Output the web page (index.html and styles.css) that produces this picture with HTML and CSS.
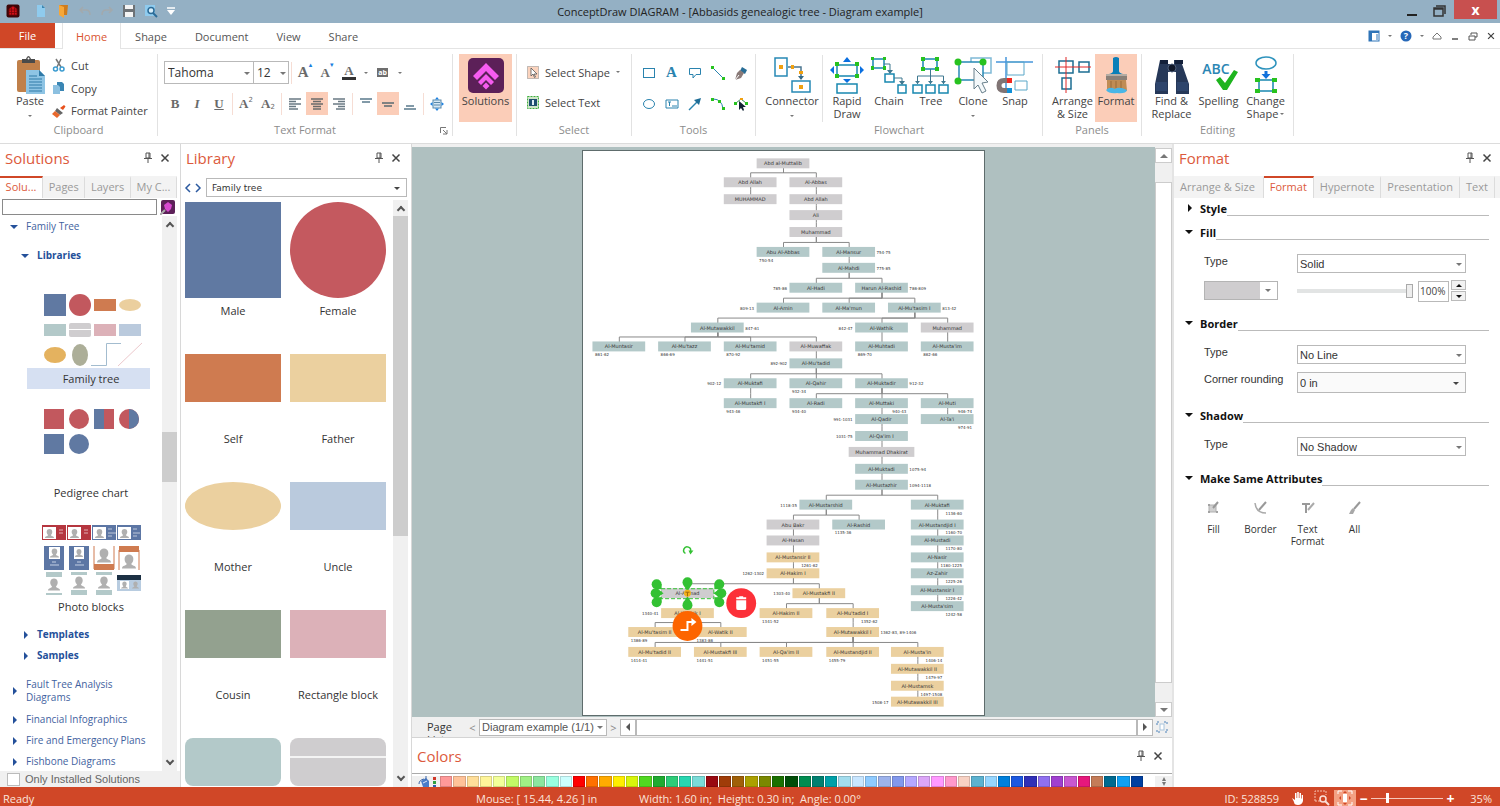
FILE: index.html
```
<!DOCTYPE html>
<html lang="en">
<head>
    <meta charset="UTF-8">
    <meta name="viewport" content="width=device-width, initial-scale=1.0">
    <title>ConceptDraw DIAGRAM</title>
    <link rel="stylesheet" href="styles.css">
</head>
<body>
    <svg class="defs" aria-hidden="true">
        <symbol id="pin" viewBox="0 0 12 12"><path d="M4 1h4v5H4zM7 1v5M2 6.500h8M6 7v4" fill="none" stroke="#555"/></symbol>
        <symbol id="cross" viewBox="0 0 12 12"><path d="M2.500 2.500l7 7M9.500 2.500l-7 7" stroke="#444" stroke-width="1.500"/></symbol>
        <symbol id="person" viewBox="0 0 12 12"><path d="M0 12c0-3 4-2 4-4-3-3-2-8 2-8s5 5 2 8c0 2 4 1 4 4z" fill="#b0b0b0"/></symbol>
    </svg>

    <header class="titlebar">
        <div class="quick">
            <button aria-label="App"><svg width="14" height="14"><rect width="13" height="13" x="0.500" y="0.500" rx="2" fill="#3c0508"/><path d="M3 5l4-3 4 3v6H3zM3 6h8M3 8.500h8M5.500 4v7M8.500 4v7" fill="#d01018" stroke="#7a0508" stroke-width="0.800"/></svg></button>
            <button aria-label="New"><svg width="14" height="14"><path d="M3 1h5l3 3v9H3z" fill="#8fcbee"/><path d="M8 1v3h3z" fill="#3d86b0"/></svg></button>
            <button aria-label="Open"><svg width="14" height="14"><path d="M3 1h9l-1 10H3z" fill="#d07c1c"/><path d="M3 1l5 2v11l-5-3z" fill="#f7a738"/></svg></button>
            <button aria-label="Undo"><svg width="14" height="14"><path d="M5 3L2 6l3 3M2 6h6q4 0 4 5" fill="none" stroke="#a2a9ad" stroke-width="1.500"/></svg></button>
            <button aria-label="Redo"><svg width="14" height="14"><path d="M9 3l3 3-3 3M12 6H6q-4 0-4 5" fill="none" stroke="#a2a9ad" stroke-width="1.500"/></svg></button>
            <button aria-label="Save"><svg width="14" height="14"><path d="M1 1h12v12H1z" fill="#6d7276"/><path d="M3 1h8v4H3zM3 8h8v5H3z" fill="#f4f4f4"/></svg></button>
            <button aria-label="Preview"><svg width="14" height="14"><path d="M1 1h10v11H1z" fill="#8fcbee"/><circle cx="7" cy="6.500" r="3" fill="#d8eefa" stroke="#2c6c98" stroke-width="1.500"/><path d="M9 9l4 4" stroke="#2c6c98" stroke-width="2"/></svg></button>
            <button class="more" aria-label="More"><svg width="10" height="10"><path d="M1 2h8" stroke="#fff" stroke-width="1.500"/><path d="M1 4h8L5 9z" fill="#fff"/></svg></button>
        </div>
        <div class="title">ConceptDraw DIAGRAM - [Abbasids genealogic tree - Diagram example]</div>
        <div class="window">
            <button aria-label="Minimize"><svg width="14" height="16"><path d="M2 13h10" stroke="#222" stroke-width="2"/></svg></button>
            <button aria-label="Restore"><svg width="14" height="16"><path d="M2 6h9v8H2zM4 4h9v8M2 7h9" fill="none" stroke="#333" stroke-width="1.500"/></svg></button>
            <button class="close" aria-label="Close">x</button>
        </div>
    </header>

    <nav class="menu">
        <a class="file" href="#">File</a>
        <a class="on" href="#">Home</a>
        <a href="#">Shape</a>
        <a href="#">Document</a>
        <a href="#">View</a>
        <a href="#">Share</a>
        <div class="menu-tools">
            <button aria-label="Layout"><svg width="12" height="12"><rect x="1" y="1" width="10" height="10" fill="#fff" stroke="#2f74b8"/><path d="M1 1h3v10H1zM1 1h10v2H1z" fill="#2f74b8"/><path d="M8 5h2M8 7h2M8 9h2" stroke="#2f74b8"/></svg></button>
            <i class="caret"></i>
            <button aria-label="Help"><svg width="12" height="12"><circle cx="6" cy="6" r="5.500" fill="#2668b8"/><text x="6" y="9" font-size="9" font-weight="700" fill="#fff" text-anchor="middle">?</text></svg></button>
            <i class="caret"></i>
            <button aria-label="Collapse"><svg width="10" height="10"><path d="M1 6l4-4 4 4v2H1z" fill="none" stroke="#777"/></svg></button>
            <button aria-label="Minimize child"><svg width="10" height="10"><path d="M2 8h6" stroke="#555" stroke-width="1.500"/></svg></button>
            <button aria-label="Restore child"><svg width="10" height="10"><path d="M1 5h6v4H1zM3 4V2h6v4H7" fill="none" stroke="#555"/></svg></button>
            <button aria-label="Close child"><svg width="10" height="10"><use href="#cross"/></svg></button>
        </div>
    </nav>

    <section class="ribbon">
        <div class="group clipboard">
            <div class="tools">
                <button class="big paste"><svg width="32" height="40"><rect x="3" y="6" width="23" height="32" rx="2" fill="#c0804a"/><path d="M8 9V5h4q1-3 2.500-3T17 5h4v4z" fill="#4a4a4a"/><circle cx="14.500" cy="4.500" r="1" fill="#fff"/><path d="M12 16h13l6 6v18H12z" fill="#8ec4e4"/><path d="M25 16v6h6z" fill="#2f7aa8"/><path d="M15 22h8M15 25h13M15 28h13M15 31h13M15 34h13M15 37h13" stroke="#2f7aa8" stroke-width="1.200"/></svg><span>Paste</span><i class="caret"></i></button>
                <div class="stack">
                    <button><svg width="14" height="14"><path d="M4 1l5 8M9 1L5 9" stroke="#777" stroke-width="1.500"/><circle cx="3.500" cy="11" r="2" fill="none" stroke="#3a9bd0" stroke-width="1.500"/><circle cx="10" cy="11" r="2" fill="none" stroke="#3a9bd0" stroke-width="1.500"/></svg>Cut</button>
                    <button><svg width="14" height="14"><path d="M5 1h5l2 2v7H5z" fill="#3a86b4"/><path d="M1 4h5l2 2v7H1z" fill="#8cc0e0"/></svg>Copy</button>
                    <button><svg width="14" height="14"><path d="M8 4l4-3 1.500 1.500L11 6z" fill="#e8501c"/><path d="M5 4l6 5-3 2-5-4z" fill="#666"/><path d="M3 7l5 4-3 3-5-4z" fill="#e8682c"/></svg>Format Painter</button>
                </div>
            </div>
            <h3>Clipboard</h3>
        </div>
        <div class="group textformat">
            <div class="tools rows">
                <div class="row">
                    <span class="pick font"><select aria-label="Font"><option>Tahoma</option></select></span>
                    <span class="pick size"><select aria-label="Font size"><option>12</option></select></span>
                    <i class="bar"></i>
                    <button class="sq serif grow">A<sup>▴</sup></button>
                    <button class="sq serif shrink">A<sup>▾</sup></button>
                    <button class="sq serif color">A</button>
                    <i class="caret"></i>
                    <button class="sq" aria-label="Highlight"><svg width="12" height="10"><path d="M0 0h11v9H0z" fill="#6e6e6e"/><text x="5.500" y="7" font-size="7" font-weight="700" fill="#fff" text-anchor="middle">ab</text></svg></button>
                    <i class="caret"></i>
                </div>
                <div class="row">
                    <button class="sq serif">B</button>
                    <button class="sq serif it">I</button>
                    <button class="sq serif un">U</button>
                    <i class="bar"></i>
                    <button class="sq serif">A<small class="up">2</small></button>
                    <button class="sq serif">A<small>2</small></button>
                    <i class="bar"></i>
                    <button class="sq" aria-label="Left"><svg width="12" height="12"><path d="M0 1h12M0 3.500h7M0 6h12M0 8.500h7M0 11h9" stroke="#6a7a84" stroke-width="1.300"/></svg></button>
                    <button class="sq on" aria-label="Center"><svg width="12" height="12"><path d="M0 1h12M2 3.500h8M0 6h12M2 8.500h8M2 11h8" stroke="#6a6a6a" stroke-width="1.300"/></svg></button>
                    <button class="sq" aria-label="Right"><svg width="12" height="12"><path d="M0 1h12M5 3.500h7M0 6h12M5 8.500h7M3 11h9" stroke="#6a7a84" stroke-width="1.300"/></svg></button>
                    <i class="bar"></i>
                    <button class="sq" aria-label="Top"><svg width="12" height="12"><path d="M0 1h12M2 4h8" stroke="#5a7a8c" stroke-width="1.500"/></svg></button>
                    <button class="sq on" aria-label="Middle"><svg width="12" height="12"><path d="M0 5h12M2 8h8" stroke="#5a6a70" stroke-width="1.500"/></svg></button>
                    <button class="sq" aria-label="Bottom"><svg width="12" height="12"><path d="M2 8h8M0 11h12" stroke="#5a7a8c" stroke-width="1.500"/></svg></button>
                    <i class="bar"></i>
                    <button class="sq" aria-label="Fit text"><svg width="14" height="14"><rect x="3" y="3" width="8" height="8" fill="#d6e8f6" stroke="#5b89a8"/><path d="M4 5.500h6M4 8h6" stroke="#5b89a8"/><path d="M5 2.500L7 0l2 2.500zM5 11.500L7 14l2-2.500zM2.500 5L0 7l2.500 2zM11.500 5L14 7l-2.500 2z" fill="#1c80e0"/></svg></button>
                </div>
            </div>
            <h3>Text Format</h3>
            <button class="launch" aria-label="Text options"><svg width="8" height="8"><path d="M0.500 6V0.500H6M3 3l4 4M7 3v4H3" fill="none" stroke="#777"/></svg></button>
        </div>
        <div class="group solo">
            <button class="big on"><svg width="36" height="40"><rect y="4" width="36" height="35" rx="5" fill="#5c2058"/><path d="M18 9l13 13-4 4-9-9-9 9-4-4z" fill="#f65cf0"/><path d="M18 20l8 8-3 3-5-5-5 5-3-3z" fill="#f65cf0"/><path d="M18 28.500l3.500 3.500-3.500 3.500-3.500-3.500z" fill="#f65cf0"/></svg><span>Solutions</span></button>
        </div>
        <div class="group select">
            <div class="tools rows">
                <button class="line"><svg width="12" height="13"><rect x="0.500" y="0.500" width="11" height="12" fill="#fbd3bd" stroke="#888" stroke-dasharray="1 1"/><path d="M4 2v8l2-2 1.500 3.500 1-.5L7 8h3z" fill="#fff" stroke="#555" stroke-width="0.800"/></svg>Select Shape<i class="caret"></i></button>
                <button class="line"><svg width="12" height="13"><rect x="0.500" y="0.500" width="11" height="12" fill="#cfe6c8" stroke="#3fae3f" stroke-dasharray="2 1"/><path d="M2 3h8v7H2z" fill="#1f4f70"/><path d="M5 4h2v5H5z" fill="#dfeef6"/></svg>Select Text</button>
            </div>
            <h3>Select</h3>
        </div>
        <div class="group toolset">
            <div class="tools toolgrid">
                <button aria-label="Rectangle"><svg width="14" height="14"><rect x="1.500" y="2.500" width="11" height="9" fill="none" stroke="#2a83ae"/></svg></button>
                <button class="serif letter">A</button>
                <button aria-label="Callout"><svg width="14" height="14"><path d="M1.500 2.500h11v6H8l-3 3.500v-3.500H1.500z" fill="none" stroke="#2a83ae"/></svg></button>
                <button aria-label="Line"><svg width="14" height="14"><path d="M2 2l10 10" stroke="#2a83ae"/><path d="M0 0h3v3H0zM11 11h3v3h-3z" fill="#27c21f"/></svg></button>
                <button aria-label="Pen"><svg width="14" height="14"><path d="M8 1l5 3-2 4-5-3z" fill="#286d96"/><path d="M6 4l4 3-3 5-6 2 2-7z" fill="#8a7a78"/><path d="M1 14l4-5" stroke="#fff"/></svg></button>
                <button aria-label="Ellipse"><svg width="14" height="14"><ellipse cx="7" cy="7" rx="5.500" ry="4.500" fill="none" stroke="#2a83ae"/></svg></button>
                <button aria-label="Text box"><svg width="14" height="14"><path d="M1 3h12v8H1z" fill="none" stroke="#2a83ae"/><path d="M3 5h3M4.500 5v4M7 9h5" stroke="#2a83ae"/></svg></button>
                <button aria-label="Arrow"><svg width="14" height="14"><path d="M1 13l8-8" stroke="#2a83ae" stroke-width="1.500"/><path d="M13 1l-2 7-5-5z" fill="#1f6d96"/></svg></button>
                <button aria-label="Arc"><svg width="14" height="14"><path d="M2 2q9 0 10 10" fill="none" stroke="#2a83ae"/><path d="M0 1h3v3H0zM7 3h3v3H7zM11 10h3v3h-3z" fill="#27c21f"/></svg></button>
                <button aria-label="Edit points"><svg width="14" height="14"><path d="M2 6l5-4 5 4" fill="none" stroke="#3a8a50"/><path d="M0 5h3v3H0zM11 5h3v3h-3z" fill="#27c21f"/><path d="M6 1h3v2H6z" fill="#f0a010"/><path d="M5 4v9l2-2 2 3 1-1-1-3h3z" fill="#123"/></svg></button>
            </div>
            <h3>Tools</h3>
        </div>
        <div class="group flow">
            <div class="tools">
                <button class="big wide"><svg width="40" height="40"><g fill="none" stroke="#2789b5" stroke-width="1.500"><path d="M3 4h12v18H3zM20 27h18v11H20z"/></g><path d="M16 13h13v12" fill="none" stroke="#4b7690" stroke-width="1.500"/><path d="M26 22h6l-3 4z" fill="#356a88"/><path d="M7 11h4v4H7zM19 11h3v4h-3zM27 17h4v3h-4zM27 31h4v4h-4z" fill="#f0a010"/></svg><span>Connector</span><i class="caret"></i></button>
                <i class="half"></i>
                <button class="big"><svg width="34" height="40"><path d="M7 11h20v11H7zM7 30h20v9H7z" fill="none" stroke="#1888b0" stroke-width="1.500"/><path d="M13 8l4-5 4 5zM13 25l4 4 4-4zM4 12v8l-4-4zM30 12v8l4-4z" fill="#0a6fe0"/><path d="M5 8h4v4H5zM25 8h4v4h-4zM5 20h4v4H5zM25 20h4v4h-4z" fill="#27c21f"/></svg><span>Rapid Draw</span></button>
                <button class="big"><svg width="40" height="40"><g fill="none" stroke="#1888b0" stroke-width="1.500"><path d="M4 5h11v9H4zM16 20h9v8h-9zM29 31h8v8h-8z"/></g><path d="M15 10h6v9M25 24h8v6" fill="none" stroke="#3f7890"/><path d="M18 16h6l-3 4zM30 27h6l-3 4z" fill="#3f7890"/><path d="M2 3h3v3H2zM14 3h3v3h-3zM2 12h3v4H2zM14 12h3v4h-3z" fill="#27c21f"/></svg><span>Chain</span></button>
                <button class="big"><svg width="40" height="40"><g fill="none" stroke="#1888b0" stroke-width="1.500"><path d="M12 5h14v10H12zM2 31h9v8H2zM15 31h9v8h-9zM28 31h9v8h-9z"/></g><path d="M19.500 15v15M6.500 30v-8h26v8" fill="none" stroke="#3f7890"/><path d="M4 27h5l-2.500 3zM17 27h5l-2.500 3zM30 27h5l-2.500 3z" fill="#3f7890"/><path d="M10 3h4v4h-4zM24 3h4v4h-4zM10 13h4v4h-4zM24 13h4v4h-4z" fill="#27c21f"/></svg><span>Tree</span></button>
                <button class="big"><svg width="40" height="40"><path d="M18 4h20v15H18z" fill="none" stroke="#7fb9d6" stroke-width="1.500"/><path d="M6 8h24v18H6z" fill="#fff" stroke="#2789b5" stroke-width="1.500"/><circle cx="5" cy="8" r="3.500" fill="#27c21f"/><circle cx="30" cy="8" r="3.500" fill="#27c21f"/><circle cx="5" cy="27" r="3.500" fill="#27c21f"/><path d="M21 14v21l4-4 4 8 4-2-4-8 6-1z" fill="#f4f8fa" stroke="#68808c"/></svg><span>Clone</span><i class="caret"></i></button>
                <button class="big"><svg width="40" height="40"><path d="M1 8h37M11 3v36" stroke="#4796dc" stroke-width="1.500"/><path d="M12 8h17v13H12zM20 27h12v9H20z" fill="none" stroke="#5aa7c8"/><path d="M14 26.500H9q-5 0-5 5t5 5h5" fill="none" stroke="#807474" stroke-width="5"/><path d="M12 24h5v5h-5z" fill="#f02820"/><path d="M12 34h5v5h-5z" fill="#1090d8"/></svg><span>Snap</span></button>
            </div>
            <h3>Flowchart</h3>
        </div>
        <div class="group panels">
            <div class="tools">
                <button class="big"><svg width="40" height="40"><g fill="none" stroke="#1c6e92" stroke-width="1.500"><path d="M6 7h14v12H6zM26 8h10v10H26zM9 24h9v11H9z"/></g><path d="M2 13h36M13 3v36" stroke="#e02828"/></svg><span>Arrange &amp; Size</span></button>
                <button class="big on"><svg width="36" height="40"><path d="M15 4q3-2 6 0v13q0 2 4 3H11q4-1 4-3z" fill="#0a7fb8"/><path d="M8 20h21v6H8z" fill="#8a8078"/><path d="M8 20h21v2H8z" fill="#b4aca4"/><path d="M9 26h19l1 11H9z" fill="#c08c54"/><path d="M13 27v8M18 27v7M23 27v8" stroke="#986a38"/><path d="M8 36q4-4 9-1 4-3 12 1-1 4-10 3-8 1-11-3z" fill="#4ab6e6"/></svg><span>Format</span></button>
            </div>
            <h3>Panels</h3>
        </div>
        <div class="group editing">
            <div class="tools">
                <button class="big"><svg width="40" height="40"><path d="M8 6h8v4h6V6h8v4l7 20v10H24V18h-8v22H3V30z" fill="#263858"/><path d="M8 6h8v4H8zM23 6h8v4h-8z" fill="#13203a"/><path d="M4 28h11v9H4zM25 28h11v9H25z" fill="#2e456c"/><circle cx="20" cy="14" r="4" fill="#10182a" stroke="#4f607c"/></svg><span>Find &amp; Replace</span></button>
                <button class="big"><svg width="40" height="40"><text x="17" y="20" font-size="14" font-weight="600" fill="#2b86b4" text-anchor="middle">ABC</text><path d="M17 26l4-3 5 6 9-13 4 2-11 18h-4z" fill="#1eb41e"/></svg><span>Spelling</span></button>
                <button class="big"><svg width="34" height="40"><ellipse cx="17" cy="9" rx="10" ry="6" fill="none" stroke="#2e93bd" stroke-width="1.500"/><path d="M15.500 17h3v3h3l-4.500 5-4.500-5h3z" fill="#1272dc"/><path d="M10 26h14v11H10z" fill="none" stroke="#1888b0" stroke-width="1.500"/><path d="M6 24h5v4H6zM23 24h5v4h-5zM6 35h5v4H6zM23 35h5v4h-5z" fill="#27c21f"/></svg><span>Change Shape<i class="caret"></i></span></button>
            </div>
            <h3>Editing</h3>
        </div>
    </section>

    <main>
        <aside class="solutions">
            <div class="head"><h2>Solutions</h2><button aria-label="Pin"><svg width="12" height="12"><use href="#pin"/></svg></button><button aria-label="Close"><svg width="12" height="12"><use href="#cross"/></svg></button></div>
            <div class="tabs">
                <button class="on">Solu...</button>
                <button>Pages</button>
                <button>Layers</button>
                <button>My C...</button>
            </div>
            <div class="search">
                <input type="text" aria-label="Search solutions">
                <button aria-label="Search"><svg width="15" height="15"><rect x="1" width="14" height="14" rx="2" fill="#5c2058"/><path d="M8 2l4 3-1 4-3 3-3-3-1-4z" fill="#d848d0"/><path d="M0 15l5-5" stroke="#aaa" stroke-width="2"/></svg></button>
            </div>
            <div class="scrollpane">
                <div class="tree">
                    <a class="open" href="#">Family Tree</a>
                    <a class="open sub libs" href="#">Libraries</a>
                    <figure>
                        <svg width="104" height="74">
                            <rect x="3" y="1" width="22" height="22" fill="#6079a2"/><circle cx="39" cy="12" r="11" fill="#c2585e"/><rect x="53" y="6" width="22" height="12" fill="#cf7b50"/><ellipse cx="89" cy="12" rx="11" ry="6" fill="#ebcf9e"/>
                            <rect x="3" y="31" width="22" height="12" fill="#b3c9c9"/><rect x="28" y="30" width="22" height="14" rx="2" fill="#cfcdcf"/><path d="M28 36.500h22" stroke="#fff"/><rect x="53" y="31" width="22" height="12" fill="#dcb1b8"/><rect x="78" y="31" width="22" height="12" fill="#bacadd"/>
                            <ellipse cx="14" cy="62" rx="11" ry="8" fill="#e4b25f"/><ellipse cx="39" cy="62" rx="8" ry="11" fill="#acae98"/><path d="M50 72.500h15.500v-22H80" fill="none" stroke="#a3bccf"/><path d="M77 73l24-23" stroke="#ecc8cc"/>
                        </svg>
                        <figcaption class="on">Family tree</figcaption>
                    </figure>
                    <figure>
                        <svg width="104" height="74">
                            <rect x="3" y="2" width="20" height="20" fill="#c2585e"/><circle cx="38" cy="12" r="10" fill="#c2585e"/><path d="M53 2h10v20H53z" fill="#6079a2"/><path d="M63 2h10v20H63z" fill="#c2585e"/><circle cx="88" cy="12" r="10" fill="#c2585e"/><path d="M88 2a10 10 0 0 1 0 20z" fill="#6079a2"/>
                            <rect x="3" y="27" width="20" height="20" fill="#6079a2"/><circle cx="38" cy="37" r="10" fill="#6079a2"/>
                        </svg>
                        <figcaption>Pedigree chart</figcaption>
                    </figure>
                    <figure>
                        <svg width="104" height="74">
                            <path d="M1 4h24v15H1zM26 4h24v15H26z" fill="#b5363f"/><path d="M51 4h24v15H51zM76 4h24v15H76z" fill="#5c76a4"/>
                            <path d="M2 6h13v12H2zM27 6h13v12H27zM52 6h13v12H52zM77 6h13v12H77z" fill="#fff"/>
                            <use href="#person" x="4" y="7" width="9" height="11"/><use href="#person" x="29" y="7" width="9" height="11"/><use href="#person" x="54" y="7" width="9" height="11"/><use href="#person" x="79" y="7" width="9" height="11"/>
                            <path d="M18 9h4M18 12h4M43 9h4M43 12h4M67 8h4M67 12h8M67 15h4M92 8h4M92 12h7M92 15h4" stroke="#fff" stroke-opacity="0.600"/>
                            <path d="M3 25h20v24H3zM28 25h20v24H28z" fill="#5c76a4"/><path d="M8 26h11v12H8zM33 26h10v12H33z" fill="#fff"/><use href="#person" x="9" y="27" width="9" height="10"/><use href="#person" x="34" y="27" width="8" height="10"/>
                            <path d="M11 41h4M9 44h9M36 41h4M34 44h9" stroke="#c4d0e4"/>
                            <path d="M53 25v23h20V25" fill="none" stroke="#cf7b50"/><path d="M53 43h20v6H53zM78 25h20v6H78z" fill="#cf7b50"/><path d="M78 49V29M98 29v20" stroke="#cf7b50"/><use href="#person" x="56" y="26" width="14" height="17"/><use href="#person" x="81" y="32" width="14" height="17"/>
                            <path d="M5 51h16v5H5zM30 51h16v3H30zM55 51h16v3H55zM5 72h16v2H5zM30 69h16v5H30zM55 69h16v5H55z" fill="#b3c9c9"/>
                            <use href="#person" x="7" y="56" width="12" height="15"/><use href="#person" x="32" y="54" width="12" height="15"/><use href="#person" x="57" y="54" width="12" height="15"/>
                            <path d="M76 54h24v16H76z" fill="#b8cce0"/><path d="M76 54h24v5H76z" fill="#1c3044"/><path d="M79 60h9v8H79z" fill="#fff"/><use href="#person" x="80" y="60" width="7" height="8"/><use href="#person" x="91" y="60" width="7" height="8"/>
                        </svg>
                        <figcaption>Photo blocks</figcaption>
                    </figure>
                    <a class="sub" href="#">Templates</a>
                    <a class="sub" href="#">Samples</a>
                    <a class="two" href="#">Fault Tree Analysis Diagrams</a>
                    <a href="#">Financial Infographics</a>
                    <a href="#">Fire and Emergency Plans</a>
                    <a href="#">Fishbone Diagrams</a>
                </div>
                <div class="vscroll mid"><i></i><b></b><i class="down"></i></div>
            </div>
            <label class="installed"><input type="checkbox">Only Installed Solutions</label>
        </aside>

        <aside class="library">
            <div class="head"><h2>Library</h2><button aria-label="Pin"><svg width="12" height="12"><use href="#pin"/></svg></button><button aria-label="Close"><svg width="12" height="12"><use href="#cross"/></svg></button></div>
            <div class="libpick">
                <button aria-label="Previous"><svg width="8" height="10"><path d="M6 1L2 5l4 4" fill="none" stroke="#2c5aa0" stroke-width="1.500"/></svg></button>
                <button aria-label="Next"><svg width="8" height="10"><path d="M2 1l4 4-4 4" fill="none" stroke="#2c5aa0" stroke-width="1.500"/></svg></button>
                <span class="pick"><select aria-label="Library"><option>Family tree</option></select></span>
            </div>
            <div class="scrollpane">
                <div class="shapes">
                    <div class="shape"><i class="male"></i><span>Male</span></div>
                    <div class="shape"><i class="female"></i><span>Female</span></div>
                    <div class="shape"><i class="self"></i><span>Self</span></div>
                    <div class="shape"><i class="father"></i><span>Father</span></div>
                    <div class="shape"><i class="mother"></i><span>Mother</span></div>
                    <div class="shape"><i class="uncle"></i><span>Uncle</span></div>
                    <div class="shape"><i class="cousin"></i><span>Cousin</span></div>
                    <div class="shape"><i class="block"></i><span>Rectangle block</span></div>
                    <div class="shape"><i class="rounded"></i></div>
                    <div class="shape"><i class="rounded split"></i></div>
                </div>
                <div class="vscroll top"><i></i><b></b><i class="down"></i></div>
            </div>
        </aside>

        <section class="center">
            <div class="workspace">
                <div class="canvas">
                    <svg id="sheet" width="403" height="566" viewBox="0 0 403 566"></svg>
                </div>
                <div class="docscroll"><button aria-label="Scroll up"><i class="up"></i></button><b></b><button aria-label="Scroll down"><i></i></button></div>
            </div>
            <div class="pagebar">
                <span class="pagelist">Page List</span>
                <button class="step">&lt;</button>
                <span class="pick"><select aria-label="Page"><option>Diagram example (1/1)</option></select></span>
                <button class="step">&gt;</button>
                <button class="box" aria-label="Scroll left"><svg width="6" height="8"><path d="M5 0v8L1 4z" fill="#555"/></svg></button>
                <div class="htrack"></div>
                <button class="box" aria-label="Scroll right"><svg width="6" height="8"><path d="M1 0v8l4-4z" fill="#555"/></svg></button>
                <button class="fit" aria-label="Fit"><svg width="12" height="12"><path d="M1 4V1h3M8 1h3v3M11 8v3H8M4 11H1V8" fill="none" stroke="#4a80b8" stroke-dasharray="2 1"/><rect x="4" y="3" width="4" height="6" fill="#fff" stroke="#a8c4dc"/></svg></button>
            </div>
            <div class="colors">
                <div class="head"><h2>Colors</h2><button aria-label="Pin"><svg width="12" height="12"><use href="#pin"/></svg></button><button aria-label="Close"><svg width="12" height="12"><use href="#cross"/></svg></button></div>
                <div class="palette">
                    <button class="bucket" aria-label="Fill"><svg width="20" height="12"><path d="M3 5l5-3 3 3v6H5z" fill="#4a7cc8"/><path d="M1 8q0-4 5-5M8 0v4" fill="none" stroke="#3a64a8"/><path d="M5 7l4-2" stroke="#dfe9f8"/><path d="M15 1h3v3h-3z" fill="#d03828"/><path d="M15 5h3v3h-3z" fill="#30a040"/><path d="M15 9h3v3h-3z" fill="#2f60b0"/></svg></button>
                    <div id="swatches"></div>
                    <div class="palscroll"><i class="up"></i><i></i></div>
                </div>
            </div>
        </section>

        <aside class="format">
            <div class="head"><h2>Format</h2><button aria-label="Pin"><svg width="12" height="12"><use href="#pin"/></svg></button><button aria-label="Close"><svg width="12" height="12"><use href="#cross"/></svg></button></div>
            <div class="tabs">
                <button>Arrange &amp; Size</button>
                <button class="on">Format</button>
                <button>Hypernote</button>
                <button>Presentation</button>
                <button>Text</button>
            </div>
            <div class="sections">
                <h4 class="closed">Style</h4>
                <h4>Fill</h4>
                <div class="fields">
                    <label for="fill-type">Type</label>
                    <span class="pick"><select id="fill-type"><option>Solid</option></select></span>
                    <button class="fillcolor" aria-label="Fill color"><i class="caret"></i></button>
                    <div class="opacity">
                        <input type="range" min="0" max="100" value="100" aria-label="Opacity">
                        <input type="text" value="100%" aria-label="Opacity value">
                        <span class="spin"><button aria-label="More"><i class="up"></i></button><button aria-label="Less"><i></i></button></span>
                    </div>
                </div>
                <h4>Border</h4>
                <div class="fields">
                    <label for="line-type">Type</label>
                    <span class="pick"><select id="line-type"><option>No Line</option></select></span>
                    <label for="rounding">Corner rounding</label>
                    <span class="pick tall"><select id="rounding"><option>0 in</option></select></span>
                </div>
                <h4>Shadow</h4>
                <div class="fields">
                    <label for="shadow-type">Type</label>
                    <span class="pick"><select id="shadow-type"><option>No Shadow</option></select></span>
                </div>
                <h4>Make Same Attributes</h4>
                <div class="same">
                    <button><svg width="14" height="14"><path d="M2 4h7v7H2z" fill="#d0d0d0" stroke="#b0b0b0"/><path d="M1 3h2v2H1zM1 10h2v2H1zM9 10h2v2H9z" fill="#a2a2a2"/><path d="M6 7l5-6" stroke="#999" stroke-width="2"/></svg>Fill</button>
                    <button><svg width="14" height="14"><path d="M1 2q1 10 11 10" fill="none" stroke="#aaa" stroke-width="1.500"/><path d="M5 9l7-8" stroke="#999" stroke-width="2"/></svg>Border</button>
                    <button><svg width="14" height="14"><path d="M1 2h8v2H6v8H4V4H1z" fill="#999"/><path d="M7 9l6-7" stroke="#aaa" stroke-width="2"/></svg>Text Format</button>
                    <button><svg width="14" height="14"><path d="M6 8l6-7" stroke="#999" stroke-width="2"/><path d="M5 7l2 2-2 4H1l2-4z" fill="#a8a8a8"/></svg>All</button>
                </div>
            </div>
        </aside>
    </main>

    <footer>
        <span class="ready">Ready</span>
        <span class="mouse">Mouse: [ 15.44, 4.26 ] in</span>
        <span class="dims">Width: 1.60 in;&nbsp; Height: 0.30 in;&nbsp; Angle: 0.00°</span>
        <span class="objid">ID: 528859</span>
        <button aria-label="Hand"><svg width="14" height="14"><path d="M1 7l3 2V2h1.500v5h.7V1h1.600v6h.7V2H10v5.500h.7V4H12v6q-1 4-5 4T3 11z" fill="#fff"/></svg></button>
        <button aria-label="Zoom area"><svg width="16" height="16"><path d="M1 11V1h11v4M1 11h5" fill="none" stroke="#f6c0ae" stroke-dasharray="2 1"/><circle cx="9" cy="9" r="3" fill="none" stroke="#fbe0d8" stroke-width="1.500"/><path d="M11 11l4 4" stroke="#fbe0d8" stroke-width="2"/></svg></button>
        <button class="fitpage" aria-label="Fit page"><svg width="16" height="16"><path d="M1 4V1h4M11 1h4v3M15 12v3h-4M5 15H1v-3" fill="none" stroke="#fff"/><rect x="6" y="4" width="4" height="8" fill="#fff"/><path d="M6 3l2-2 2 2zM6 13l2 2 2-2zM4 6L2 8l2 2zM12 6l2 2-2 2z" fill="#d04727"/></svg></button>
        <button class="zoom">−</button>
        <input type="range" min="0" max="100" value="22" aria-label="Zoom">
        <button class="zoom">+</button>
        <span class="percent">35%</span>
    </footer>

    <script src="tree.js"></script>
</body>
</html>
```

FILE: styles.css
```
*, *::before, *::after {
    box-sizing: border-box;
}
body {
    margin: 0;
    height: 100vh;
    display: flex;
    flex-direction: column;
    overflow: hidden;
    background: #fff;
    color: #444;
    font: 11px/13px "Open Sans", "Noto Sans", sans-serif;
}
button {
    padding: 0;
    border: 0;
    background: none;
    color: inherit;
    font: inherit;
    display: flex;
    align-items: center;
    justify-content: center;
}
svg {
    display: block;
    flex: none;
}
a {
    color: inherit;
    text-decoration: none;
}
h2, h3, h4, figure {
    margin: 0;
    font-weight: 400;
}
.defs {
    position: absolute;
    width: 0;
    height: 0;
}
.caret {
    border: 3px solid transparent;
    border-top-color: #777;
    border-bottom: 0;
}

/* title bar */
.titlebar {
    height: 23px;
    flex: none;
    display: grid;
    grid-template-columns: 1fr auto 1fr;
    background: #94b0c4;
}
.quick {
    display: flex;
    align-items: center;
    gap: 8px;
    padding: 0 0 2px 6px;
}
.quick button:first-child {
    margin-right: 6px;
}
.title {
    padding-right: 20px;
    font-size: 11px;
    line-height: 23px;
    color: #222;
}
.window {
    display: flex;
    justify-content: flex-end;
    padding-right: 3px;
    height: 19px;
}
.window button {
    width: 27px;
}
.window .close {
    width: 43px;
    margin-left: 2px;
    background: #c8504f;
    color: #fff;
    font-size: 14px;
    font-weight: 700;
}

/* menu */
.menu {
    height: 26px;
    flex: none;
    display: flex;
    border-bottom: 1px solid #e4e4e4;
    color: #555;
}
.menu a {
    padding: 0 14px;
    line-height: 28px;
}
.menu .file {
    width: 55px;
    background: #d04727;
    color: #fff;
    text-align: center;
    line-height: 25px;
    padding: 0;
    margin-right: 7px;
}
.menu .on {
    height: 26px;
    border: solid #e4e4e4;
    border-width: 0 1px;
    padding: 0 13px;
    background: #fff;
    color: #d9532f;
}
.menu-tools {
    margin-left: auto;
    display: flex;
    align-items: center;
    gap: 8px;
    padding-right: 4px;
}
.menu-tools .caret {
    border-width: 2px;
    border-bottom: 0;
}

/* ribbon */
.ribbon {
    height: 95px;
    flex: none;
    display: flex;
    border-bottom: 1px solid #dcdcdc;
    padding: 5px 0 7px;
}
.group {
    flex: none;
    display: flex;
    flex-direction: column;
    position: relative;
    border-right: 1px solid #e2e2e2;
}
.group h3 {
    margin-top: auto;
    text-align: center;
    font-size: 11px;
    line-height: 12px;
    color: #8c8c8c;
}
.tools {
    height: 68px;
    display: flex;
}
.clipboard { width: 158px; }
.textformat { width: 295px; }
.solo { width: 64px; }
.select { width: 115px; }
.toolset { width: 124px; }
.flow { width: 287px; }
.panels { width: 99px; }
.editing { width: 152px; }
.clipboard .tools {
    padding-left: 8px;
}
.stack button {
    height: 23px;
    gap: 5px;
}
.stack {
    display: flex;
    flex-direction: column;
    align-items: flex-start;
}
.big {
    width: 42px;
    height: 68px;
    flex-direction: column;
    justify-content: flex-start;
    line-height: 13px;
}
.big > .caret {
    margin-top: 8px;
}
.big > .caret, .line .caret {
    border-width: 2px;
    border-bottom: 0;
}
.big span .caret {
    display: inline-block;
    margin: 0 0 3px 2px;
    border-width: 2px;
    border-bottom: 0;
}
.big.on, .sq.on {
    background: #fbcdb8;
}
.big.wide {
    width: 60px;
}
.big.paste {
    width: 44px;
}
.solo {
    padding-left: 6px;
}
.solo .big {
    width: 53px;
}
.flow .tools {
    padding-left: 6px;
}
.half {
    border-left: 1px solid #e2e2e2;
    margin: 1px 3px 0 0;
}
.panels .tools {
    padding-left: 7px;
}
.panels .big:first-child {
    width: 45px;
}
.editing .tools {
    padding-left: 6px;
}
.editing .big {
    width: 47px;
}
.rows {
    flex-direction: column;
    gap: 8px;
    padding: 7px 0 0 6px;
}
.row {
    display: flex;
    align-items: center;
    height: 23px;
}
.pick {
    display: flex;
    position: relative;
}
.pick::after {
    content: "";
    position: absolute;
    right: 4px;
    top: 50%;
    margin-top: -1px;
    border: 3px solid transparent;
    border-top: 3px solid #777;
    border-bottom: 0;
    pointer-events: none;
}
select {
    appearance: none;
    width: 100%;
    height: 19px;
    margin: 0;
    padding: 0 2px;
    border: 1px solid #b9b9b9;
    border-radius: 0;
    background: #fff;
    color: #333;
    font: 11px "Liberation Sans", Arial, sans-serif;
}
.font {
    width: 90px;
}
.size {
    width: 36px;
    margin-left: -1px;
}
.row select {
    height: 23px;
    padding-left: 3px;
    font: 12px "Open Sans", sans-serif;
}
.size::after {
    right: 3px;
}
.bar {
    width: 1px;
    height: 22px;
    margin: 0 2px;
    background: #f6ddd4;
}
.sq {
    width: 22px;
    height: 23px;
}
.serif {
    font: 700 13px "Liberation Serif", serif;
    color: #6a6a6a;
}
.serif sup, .serif small {
    font: 7px "DejaVu Sans", sans-serif;
}
.serif sup {
    color: #1c80e0;
    align-self: flex-start;
}
.serif small {
    align-self: flex-end;
    padding-bottom: 4px;
}
.serif .up {
    align-self: flex-start;
    padding: 4px 0 0;
}
.grow {
    font-size: 15px;
}
.it {
    font-style: italic;
}
.un {
    text-decoration: underline;
}
.color {
    width: 14px;
    height: 15px;
    margin: 0 4px;
    border-bottom: 3px solid #333;
}
.row .caret {
    margin: 0 4px;
    border-width: 2px;
    border-bottom: 0;
}
.launch {
    position: absolute;
    right: 4px;
    bottom: 1px;
}
.select .rows {
    padding-left: 10px;
    gap: 8px;
}
.line {
    height: 22px;
    justify-content: flex-start;
    gap: 6px;
}
.toolgrid {
    display: grid;
    grid-template-columns: repeat(5, 23px);
    grid-template-rows: 23px 23px;
    row-gap: 8px;
    padding: 7px 0 0 5px;
}
.letter {
    color: #2a83ae;
    font-size: 15px;
}

/* panels */
main {
    flex: 1;
    min-height: 0;
    display: grid;
    grid-template-columns: 181px 231px minmax(0, 1fr) 326px;
    grid-template-rows: minmax(0, 1fr);
}
aside {
    display: flex;
    flex-direction: column;
    min-width: 0;
    min-height: 0;
}
.head {
    height: 32px;
    flex: none;
    display: flex;
    gap: 5px;
    align-items: center;
    padding: 0 9px 4px 5px;
}
.head h2 {
    flex: 1;
    font-size: 15px;
    line-height: 20px;
    color: #dc5a3c;
}
.tabs {
    height: 22px;
    flex: none;
    display: flex;
    background: #f3f3f3;
    color: #9a9a9a;
}
.tabs button {
    flex: none;
    padding: 0 6px 3px;
    border-right: 1px solid #dcdcdc;
    border-top: 2px solid transparent;
    white-space: nowrap;
}
.tabs .on {
    border-top-color: #d04727;
    background: #fff;
    color: #dc5a3c;
}
.solutions, .library {
    border-right: 1px solid #d8d8d8;
}
.solutions .tabs button {
    flex: auto;
    padding: 0 5px 3px;
}
.solutions .tabs {
    margin-right: 3px;
}
.search {
    flex: none;
    display: flex;
    gap: 3px;
    height: 18px;
    padding: 0 5px 0 2px;
    align-items: center;
}
.search input {
    flex: 1;
    min-width: 0;
    height: 16px;
    border: 1px solid #8a8a8a;
}
.scrollpane {
    flex: 1;
    min-height: 0;
    display: flex;
    overflow: hidden;
}
.tree {
    flex: 1;
    font-size: 10px;
    color: #3f62a0;
}
.tree a {
    display: flex;
    align-items: center;
    min-height: 21px;
    padding-left: 13px;
}
.tree a::before {
    content: "";
    flex: none;
    width: 4px;
    margin-right: 9px;
    border: 4px solid transparent;
    border-left: 4px solid #24509a;
    border-right: 0;
}
.tree .open::before {
    width: 8px;
    margin: 0 8px 0 -3px;
    border: 4px solid transparent;
    border-top: 4px solid #24509a;
    border-bottom: 0;
}
.tree .sub {
    padding-left: 24px;
    font-weight: 700;
    color: #24509a;
}
.tree .libs {
    margin: 8px 0 27px;
}
.tree .two {
    min-height: 26px;
    margin: 12px 0 5px;
    padding-right: 30px;
}
figure {
    margin: 0 0 18px 27px;
    width: 123px;
    color: #333;
    font-size: 11px;
}
figure svg {
    margin: 0 0 1px 14px;
}
figure:last-of-type {
    margin-bottom: 7px;
}
figcaption {
    line-height: 21px;
    padding-left: 5px;
    text-align: center;
}
figcaption.on {
    background: #d6e0f2;
}
.vscroll {
    width: 15px;
    flex: none;
    display: flex;
    flex-direction: column;
    align-items: center;
    background: #f0f0f0;
}
.vscroll i {
    width: 6px;
    height: 6px;
    margin-top: 7px;
    border: solid #555;
    border-width: 2px 0 0 2px;
    transform: rotate(45deg);
}
.vscroll .down {
    margin: auto 0 7px;
    transform: rotate(225deg);
}
.vscroll b {
    width: 15px;
    background: #cdcdcd;
}
.mid {
    margin-right: 3px;
}
.mid b {
    margin-top: 203px;
    height: 50px;
}
.top {
    margin-right: 3px;
}
.top b {
    margin-top: 3px;
    height: 320px;
}
.installed {
    flex: none;
    height: 16px;
    display: flex;
    align-items: center;
    gap: 5px;
    padding-left: 7px;
    background: #f0f0f0;
    color: #666;
    font: 11px "Liberation Sans", Arial, sans-serif;
}
.installed input {
    appearance: none;
    width: 13px;
    height: 13px;
    margin: 0;
    border: 1px solid #bbb;
    background: #fff;
}
.libpick {
    flex: none;
    display: flex;
    gap: 2px;
    padding: 2px 4px 3px 3px;
}
.libpick .pick {
    flex: 1;
    margin-left: 2px;
}
.libpick select {
    font: 9px "DejaVu Sans", sans-serif;
    padding-left: 5px;
}
.shapes {
    flex: 1;
    display: grid;
    grid-template-columns: 96px 96px;
    grid-auto-rows: 128px;
    column-gap: 9px;
    align-content: start;
    padding: 2px 0 0 4px;
}
.shape {
    color: #333;
    text-align: center;
}
.shape i {
    display: block;
    height: 48px;
    margin: 24px 0;
}
.shape span {
    display: block;
    padding-top: 6px;
}
.male { background: #6079a2; }
.female { background: #c4595f; border-radius: 50%; }
.shape .male, .shape .female {
    height: 96px;
    margin: 0;
}
.self { background: #cf7b50; }
.father { background: #ebd09f; }
.mother { background: #ebd09f; border-radius: 50%; }
.uncle { background: #bacadd; }
.cousin { background: #93a18f; }
.block { background: #dcb1b8; }
.rounded { background: #b3c9c9; border-radius: 8px; }
.rounded.split {
    background: linear-gradient(#cfcdcf 18px, #f4f4f4 18px, #f4f4f4 20px, #cfcdcf 20px);
}

/* drawing area */
.center {
    display: flex;
    flex-direction: column;
    min-width: 0;
    padding-top: 3px;
    background: #f0f0f0;
    border-right: 2px solid #e4e4e4;
}
.workspace {
    flex: 1;
    min-height: 0;
    display: flex;
}
.canvas {
    flex: 1;
    display: flex;
    justify-content: center;
    align-items: flex-start;
    padding-top: 3px;
    overflow: hidden;
    background: #afc0c0;
}
#sheet {
    background: #fff;
    border: 1px solid #5e6c6c;
}
.node {
    font: 5px "DejaVu Sans", sans-serif;
    fill: #333;
    text-anchor: middle;
}
.years {
    font: 4px "DejaVu Sans", sans-serif;
    fill: #333;
}
.end {
    text-anchor: end;
}
.link {
    fill: none;
    stroke: #888;
}
.grey { fill: #cfcdcf; }
.teal { fill: #b3c9c9; }
.sand { fill: #ebd09f; }
.handle { fill: #33c133; }
.docscroll {
    width: 17px;
    display: flex;
    flex-direction: column;
    gap: 19px;
    padding-top: 1px;
}
.docscroll button {
    height: 15px;
    flex: none;
    border: 1px solid #ccc;
    background: #fff;
}
.docscroll b {
    flex: 1;
    border: 1px solid #ccc;
    background: #fff;
}
.docscroll i, .spin i, .palscroll i {
    border: 4px solid transparent;
    border-top-color: #777;
    border-bottom: 0;
}
.docscroll .up, .spin .up, .palscroll .up {
    border: 4px solid transparent;
    border-bottom-color: #777;
    border-top: 0;
}
.pagebar {
    height: 20px;
    flex: none;
    display: flex;
    align-items: center;
    padding: 0 2px 0 15px;
    overflow: hidden;
}
.pagelist {
    align-self: flex-start;
    width: 39px;
    margin-top: 3px;
    padding-right: 10px;
    color: #333;
}
.pagebar .pick {
    width: 128px;
}
.pagebar select {
    height: 17px;
    color: #555;
}
.step {
    width: 13px;
    color: #888;
}
.box {
    width: 16px;
    height: 17px;
    border: 1px solid #b9b9b9;
    background: #fff;
}
.htrack {
    flex: 1;
    height: 17px;
    border: 1px solid #b9b9b9;
    background: #fff;
}
.fit {
    width: 17px;
}
.colors {
    flex: none;
    background: #fff;
    border-top: 1px solid #d4d4d4;
}
.colors .head {
    height: 35px;
    padding-bottom: 0;
    padding-right: 8px;
}
.palette {
    display: flex;
    height: 14px;
    border-top: 1px solid #aaa;
    padding-top: 2px;
}
.bucket {
    width: 28px;
    padding-left: 4px;
    background: #f0f0f0;
}
#swatches {
    flex: 1;
    display: flex;
    gap: 1px;
}
#swatches button {
    flex: 1;
    border: 1px solid rgba(0, 0, 0, 0.15);
}
.palscroll {
    width: 17px;
    margin-left: 12px;
    display: flex;
    flex-direction: column;
    align-items: center;
    justify-content: space-around;
    background: #f0f0f0;
}
.palscroll i, .palscroll .up {
    border-left-width: 2px;
    border-right-width: 2px;
}

/* format panel */
.format .head {
    padding-right: 7px;
}
.format .tabs button:first-child {
    padding-right: 8px;
}
.sections {
    padding: 2px 11px 0;
}
h4 {
    display: flex;
    align-items: center;
    height: 16px;
    margin-bottom: 8px;
    font-weight: 700;
    color: #111;
}
h4::before {
    content: "";
    width: 8px;
    margin-right: 7px;
    border: 4px solid transparent;
    border-top: 4px solid #111;
    border-bottom: 0;
}
h4.closed::before {
    width: 4px;
    margin: 0 8px 0 3px;
    border: 4px solid transparent;
    border-left: 4px solid #111;
    border-right: 0;
}
h4::after {
    content: "";
    flex: 1;
    align-self: flex-end;
    border-bottom: 1px solid #bbb;
}
.fields {
    display: grid;
    grid-template-columns: 93px minmax(0, 1fr);
    row-gap: 8px;
    margin: 14px 23px 14px 19px;
    color: #333;
}
.fields label {
    font: 11px/15px "Liberation Sans", Arial, sans-serif;
}
.tall select {
    height: 21px;
    background: #fafafa;
}
.fields .tall::after, .libpick .pick::after {
    right: 7px;
    border-top-color: #444;
}
.fillcolor {
    width: 74px;
    height: 19px;
    justify-content: flex-end;
    padding-right: 6px;
    border: 1px solid #b4b4b4;
    background: linear-gradient(90deg, #cfcdcf 55px, #fff 55px);
}
.opacity {
    display: flex;
    height: 20px;
    align-items: center;
}
input[type="range"] {
    appearance: none;
    flex: 1;
    min-width: 0;
    height: 14px;
    margin: 0 5px 0 0;
    background: linear-gradient(#e2e4e4, #e2e4e4) center / 100% 4px no-repeat;
}
input[type="range"]::-webkit-slider-thumb {
    appearance: none;
    width: 7px;
    height: 14px;
    border: 1px solid #aaa;
    background: #eee;
}
.opacity input[type="text"] {
    width: 31px;
    height: 21px;
    margin-right: 2px;
    padding: 0 1px;
    border: 1px solid #b9b9b9;
    color: #444;
    font: 10px "Open Sans", sans-serif;
}
.spin {
    width: 15px;
}
.spin button {
    width: 15px;
    height: 10px;
    margin-bottom: 1px;
    border: 1px solid #bbb;
    background: #f2f2f2;
}
.spin i {
    border-width: 3px;
    border-top-color: #111;
    border-bottom: 0;
}
.spin .up {
    border: 3px solid transparent;
    border-top: 0;
    border-bottom: 3px solid #111;
}
.same {
    display: grid;
    grid-template-columns: repeat(4, 47px);
    align-items: start;
    padding-left: 5px;
    color: #333;
    font-size: 10px;
    line-height: 12px;
    margin-top: 15px;
}
.same button {
    flex-direction: column;
    gap: 8px;
}

/* status bar */
footer {
    height: 19px;
    flex: none;
    display: flex;
    align-items: center;
    padding: 3px 8px 0 3px;
    background: #d04727;
    color: #fbe4dc;
}
.ready {
    width: 473px;
}
.mouse {
    width: 163px;
}
.objid {
    margin: 0 7px 0 auto;
}
footer button {
    width: 24px;
}
.fitpage {
    width: 22px;
    background: #f3a184;
}
.zoom {
    width: 15px;
    color: #fff;
    font-size: 14px;
    font-weight: 700;
}
footer input[type="range"] {
    flex: none;
    width: 72px;
    margin: 0;
    background: linear-gradient(#f6c8ba, #f6c8ba) center / 100% 1px no-repeat;
}
footer input[type="range"]::-webkit-slider-thumb {
    width: 3px;
    height: 10px;
    border: 0;
    background: #fff;
}
.percent {
    width: 34px;
    text-align: right;
}
```

FILE: tree.js
```
const SVG = 'http://www.w3.org/2000/svg';
const sheet = document.getElementById('sheet');

function add(tag, attrs, text) {
    const el = document.createElementNS(SVG, tag);
    for (const key in attrs) el.setAttribute(key, attrs[key]);
    if (text) el.textContent = text;
    sheet.appendChild(el);
}

// id: [name, x, y, tone, parent, years, side of the years]
const people = {
    a1: ['Abd al-Muttalib', 201, 12, 'grey'],
    a2: ['Abd Allah', 168, 31, 'grey', 'a1'],
    a3: ['Al-Abbas', 234, 31, 'grey', 'a1'],
    a4: ['MUHAMMAD', 168, 48, 'grey', 'a2'],
    a5: ['Abd Allah', 234, 48, 'grey', 'a3'],
    a6: ['Ali', 234, 64, 'grey', 'a5'],
    a7: ['Muhammad', 234, 81, 'grey', 'a6'],
    b1: ['Abu Al-Abbas', 201, 101, 'teal', 'a7', '750-54', 'bl'],
    b2: ['Al-Mansur', 267, 101, 'teal', 'a7', '754-75', 'r'],
    b3: ['Al-Mahdi', 267, 117, 'teal', 'b2', '775-85', 'r'],
    b4: ['Al-Hadi', 234, 137, 'teal', 'b3', '785-86', 'l'],
    b5: ['Harun Al-Rashid', 300, 137, 'teal', 'b3', '786-809', 'r'],
    b6: ['Al-Amin', 201, 157, 'teal', 'b5', '809-13', 'l'],
    b7: ['Al-Ma\'mun', 267, 157, 'teal', 'b5'],
    b8: ['Al-Mu\'tasim I', 333, 157, 'teal', 'b5', '813-42', 'r'],
    c1: ['Al-Mutawakkil', 135, 177, 'teal', 'b8', '847-61', 'r'],
    c2: ['Al-Wathik', 300, 177, 'teal', 'b8', '842-47', 'l'],
    c3: ['Muhammad', 366, 177, 'grey', 'b8'],
    c4: ['Al-Muntasir', 36, 196, 'teal', 'c1', '861-62', 'bl'],
    c5: ['Al-Mu\'tazz', 102, 196, 'teal', 'c1', '866-69', 'bl'],
    c6: ['Al-Mu\'tamid', 168, 196, 'teal', 'c1', '870-92', 'bl'],
    c7: ['Al-Muwaffak', 234, 196, 'grey', 'c1'],
    c8: ['Al-Muhtadi', 300, 196, 'teal', 'c2', '869-70', 'bl'],
    c9: ['Al-Musta\'im', 366, 196, 'teal', 'c3', '862-66', 'bl'],
    d1: ['Al-Mu\'tadid', 234, 213, 'teal', 'c7', '892-902', 'l'],
    d2: ['Al-Muktafi', 168, 233, 'teal', 'd1', '902-12', 'l'],
    d3: ['Al-Qahir', 234, 233, 'teal', 'd1', '932-34', 'bl'],
    d4: ['Al-Muktadir', 300, 233, 'teal', 'd1', '912-32', 'r'],
    d5: ['Al-Mustakfi I', 168, 253, 'teal', 'd2', '943-46', 'bl'],
    d6: ['Al-Radi', 234, 253, 'teal', 'd4', '934-40', 'bl'],
    d7: ['Al-Muttaki', 300, 253, 'teal', 'd4', '940-43', 'br'],
    d8: ['Al-Muti', 366, 253, 'teal', 'd4', '946-74', 'br'],
    e1: ['Al-Qadir', 300, 269, 'teal', 'd7', '991-1031', 'l'],
    e2: ['Al-Ta\'i', 366, 269, 'teal', 'd8', '974-91', 'br'],
    e3: ['Al-Qa\'im I', 300, 286, 'teal', 'e1', '1031-75', 'l'],
    e4: ['Muhammad Dhakirat', 300, 302, 'grey', 'e3'],
    e5: ['Al-Muktadi', 300, 319, 'teal', 'e4', '1075-94', 'r'],
    e6: ['Al-Mustazhir', 300, 335, 'teal', 'e5', '1094-1118', 'r'],
    f1: ['Al-Mustarshid', 244, 355, 'teal', 'e6', '1118-35', 'l'],
    f2: ['Al-Muktafi', 356, 355, 'teal', 'e6', '1136-60', 'br'],
    f3: ['Abu Bakr', 211, 375, 'grey', 'f1'],
    f4: ['Al-Rashid', 277, 375, 'teal', 'f1', '1135-36', 'bl'],
    f5: ['Al-Mustandjid I', 356, 375, 'teal', 'f2', '1160-70', 'br'],
    f6: ['Al-Mustadi', 356, 391, 'teal', 'f5', '1170-80', 'br'],
    f7: ['Al-Nasir', 356, 408, 'teal', 'f6', '1180-1225', 'br'],
    f8: ['Az-Zahir', 356, 424, 'teal', 'f7', '1225-26', 'br'],
    f9: ['Al-Mustansir I', 356, 441, 'teal', 'f8', '1226-42', 'br'],
    f10: ['Al-Musta\'sim', 356, 457, 'teal', 'f9', '1242-58', 'br'],
    g1: ['Al-Hasan', 211, 391, 'grey', 'f3'],
    g2: ['Al-Mustansir II', 211, 408, 'sand', 'g1', '1261-62', 'br'],
    g3: ['Al-Hakim I', 211, 424, 'sand', 'g2', '1262-1302', 'l'],
    g4: ['Al-Ahmad', 105, 444, 'grey', 'g3'],
    g5: ['Al-Mustakfi II', 237, 444, 'sand', 'g3', '1303-40', 'l'],
    g6: ['Al-Wathik I', 105, 464, 'sand', 'g4', '1340-41', 'l'],
    g7: ['Al-Hakim II', 204, 464, 'sand', 'g5', '1341-52', 'bl'],
    g8: ['Al-Mu\'tadid I', 271, 464, 'sand', 'g5', '1352-62', 'br'],
    h1: ['Al-Mu\'tasim II', 72, 483, 'sand', 'g6', '1386-89', 'bl'],
    h2: ['Al-Watik II', 138, 483, 'sand', 'g6', '1383-86', 'bl'],
    h3: ['Al-Mutawakkil I', 271, 483, 'sand', 'g8', '1362-83, 89-1406', 'r'],
    h4: ['Al-Mu\'tadid II', 72, 503, 'sand', 'h3', '1414-41', 'bl'],
    h5: ['Al-Mustakfi III', 138, 503, 'sand', 'h3', '1441-51', 'bl'],
    h6: ['Al-Qa\'im II', 204, 503, 'sand', 'h3', '1451-55', 'bl'],
    h7: ['Al-Mustandjid II', 271, 503, 'sand', 'h3', '1455-79', 'bl'],
    h8: ['Al-Musta\'in', 336, 503, 'sand', 'h3', '1406-14', 'br'],
    i1: ['Al-Mutawakkil II', 336, 520, 'sand', 'h8', '1479-97', 'br'],
    i2: ['Al-Mustamsk', 336, 537, 'sand', 'i1', '1497-1508', 'br'],
    i3: ['Al-Mutawakkil III', 336, 553, 'sand', 'i2', '1508-17', 'l']
};

const sides = {
    l: [-29, 2, 'years end'],
    r: [28, 2, 'years'],
    bl: [-24, 10, 'years'],
    br: [25, 10, 'years end']
};

// connectors go below the boxes
for (const id in people) {
    const [, x, y, , parent] = people[id];
    if (!parent) continue;
    const px = people[parent][1];
    const py = people[parent][2];
    add('path', { class: 'link', d: `M${px + 0.5} ${py}V${y - 9.5}H${x + 0.5}V${y}` });
}

for (const id in people) {
    const [name, x, y, tone, , years, side] = people[id];
    const w = name.length > 16 && tone === 'grey' ? 66 : 53;
    add('rect', { class: tone, x: x - w / 2, y: y - 5, width: w, height: 10 });
    add('text', { class: 'node', x: x, y: y + 2 }, name);
    if (years) {
        const [dx, dy, cls] = sides[side];
        add('text', { class: cls, x: x + dx, y: y + dy }, years);
    }
}

// selection around the active box
add('rect', { x: 78.5, y: 439.5, width: 53, height: 10, fill: 'none', stroke: '#33c133', 'stroke-dasharray': '4 2' });
[[74, 435], [73, 444], [74, 453], [105, 433], [105, 456], [137, 435], [139, 444], [137, 453]].forEach(([x, y]) => {
    add('circle', { class: 'handle', cx: x, cy: y, r: 5 });
    if (y !== 444 && x !== 105) {
        add('rect', { class: 'handle', x: x < 105 ? x : x - 5, y: y < 444 ? y : y - 5, width: 5, height: 5 });
    }
});
add('path', { class: 'handle', d: 'M101 436h8l-4 6zM101 453h8l-4-6zM75 440v8l6-4zM137 440v8l-6-4z' });
add('circle', { cx: 105, cy: 444, r: 3.5, fill: '#f5b31c' });
add('path', { d: 'M103 443h4M105 443v4', stroke: '#a06808', fill: 'none' });
add('path', { d: 'M103 404a3.500 3.500 0 1 1 5-2', stroke: '#33c133', 'stroke-width': 1.5, fill: 'none' });
add('path', { d: 'M106 401h5l-3 4z', fill: '#33c133' });
add('circle', { cx: 159, cy: 454, r: 15, fill: '#fc3038' });
add('path', { d: 'M154 451h10v8q0 2-2 2h-6q-2 0-2-2zM154 448h3v-1h4v1h3v2h-10z', fill: '#fff' });
add('circle', { cx: 105, cy: 477, r: 15, fill: '#fd6500' });
add('path', { d: 'M98 481h7v-8h5', stroke: '#fff', 'stroke-width': 2, fill: 'none' });
add('path', { d: 'M109 469l5 4-5 4z', fill: '#fff' });

const swatches = [
    '#ff9999', '#ffc299', '#ffde99', '#fff599', '#f2ff99', '#c2fa66', '#a0f084', '#8ce69f', '#99ffe0', '#ccffff',
    '#ff0000', '#ff7000', '#ffaa00', '#ffee00', '#d8f50a', '#50d820', '#1fab30', '#2dcc78', '#28d6b0', '#7adcd8',
    '#990810', '#a03c08', '#a06008', '#aba000', '#7a8800', '#1a7000', '#004d08', '#008c50', '#008070', '#00a0a8',
    '#a3ddee', '#c8e6ff', '#8fcbff', '#9db3ec', '#8298ec', '#b5a8ff', '#dca6f8', '#ff99ff', '#ff99cc', '#f8d2c4',
    '#5cb2d0', '#96d6ff', '#0080dc', '#1c58e0', '#3030b8', '#9070f0', '#a040d0', '#c858d0', '#e6187c', '#c47c58',
    '#006a90', '#10a0f4', '#0040a0'
];
const palette = document.getElementById('swatches');
swatches.forEach(color => {
    const button = document.createElement('button');
    button.style.background = color;
    button.title = color;
    palette.appendChild(button);
});
```
